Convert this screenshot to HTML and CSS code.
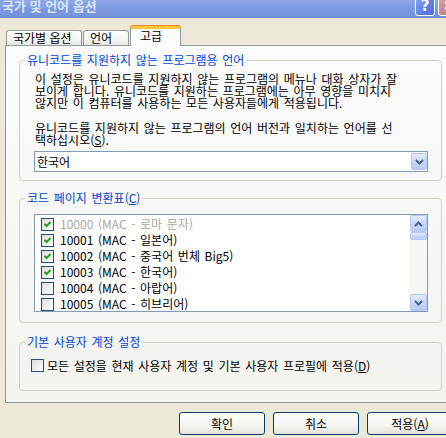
FILE: index.html
```html
<!DOCTYPE html>
<html lang="ko">
<head>
<meta charset="utf-8">
<title>국가 및 언어 옵션</title>
<link rel="stylesheet" href="styles.css">
</head>
<body>
<div class="titlebar">
  <span class="title">국가 및 언어 옵션</span>
  <div class="capbtns">
    <span class="capbtn help">?</span>
    <span class="capbtn close"><svg width="11" height="11" viewBox="0 0 11 11"><path d="M2 2 L9 9 M9 2 L2 9" stroke="#fff" stroke-width="2" fill="none"/></svg></span>
  </div>
</div>
<div class="tabs">
  <div class="tab t1">국가별 옵션</div>
  <div class="tab t2">언어</div>
  <div class="tab t3 active">고급</div>
</div>
<div class="panel">
  <fieldset class="group g1">
    <legend>유니코드를 지원하지 않는 프로그램용 언어</legend>
    <p class="desc">이 설정은 유니코드를 지원하지 않는 프로그램의 메뉴나 대화 상자가 잘<br>보이게 합니다. 유니코드를 지원하는 프로그램에는 아무 영향을 미치지<br>않지만 이 컴퓨터를 사용하는 모든 사용자들에게 적용됩니다.</p>
    <p class="desc second">유니코드를 지원하지 않는 프로그램의 언어 버전과 일치하는 언어를 선<br>택하십시오(<u>S</u>).</p>
    <div class="combo">
      <span class="combo-text">한국어</span>
      <span class="xpbtn dropbtn"><svg width="9" height="6" viewBox="0 0 9 6"><path d="M1 1 L4.5 4.5 L8 1" stroke="#4D6185" stroke-width="2" fill="none"/></svg></span>
    </div>
  </fieldset>
  <fieldset class="group g2">
    <legend>코드 페이지 변환표(<u>C</u>)</legend>
    <div class="listbox">
      <ul class="items">
        <li class="disabled"><span class="cb checked"><svg width="11" height="11" viewBox="0 0 11 11"><path d="M2.5 5 L4.5 7 L8.5 3" stroke="#21A121" stroke-width="2" fill="none"/></svg></span><span>10000 (MAC - 로마 문자)</span></li>
        <li><span class="cb checked"><svg width="11" height="11" viewBox="0 0 11 11"><path d="M2.5 5 L4.5 7 L8.5 3" stroke="#21A121" stroke-width="2" fill="none"/></svg></span><span>10001 (MAC - 일본어)</span></li>
        <li><span class="cb checked"><svg width="11" height="11" viewBox="0 0 11 11"><path d="M2.5 5 L4.5 7 L8.5 3" stroke="#21A121" stroke-width="2" fill="none"/></svg></span><span>10002 (MAC - 중국어 번체 Big5)</span></li>
        <li><span class="cb checked"><svg width="11" height="11" viewBox="0 0 11 11"><path d="M2.5 5 L4.5 7 L8.5 3" stroke="#21A121" stroke-width="2" fill="none"/></svg></span><span>10003 (MAC - 한국어)</span></li>
        <li><span class="cb"></span><span>10004 (MAC - 아랍어)</span></li>
        <li><span class="cb"></span><span>10005 (MAC - 히브리어)</span></li>
      </ul>
      <div class="scrollbar">
        <span class="xpbtn sbtn"><svg width="9" height="6" viewBox="0 0 9 6"><path d="M1 5 L4.5 1.5 L8 5" stroke="#4D6185" stroke-width="2" fill="none"/></svg></span>
        <span class="xpbtn thumb"></span>
        <span class="track"></span>
        <span class="xpbtn sbtn"><svg width="9" height="6" viewBox="0 0 9 6"><path d="M1 1 L4.5 4.5 L8 1" stroke="#4D6185" stroke-width="2" fill="none"/></svg></span>
      </div>
    </div>
  </fieldset>
  <fieldset class="group g3">
    <legend>기본 사용자 계정 설정</legend>
    <label class="check"><span class="cb"></span><span>모든 설정을 현재 사용자 계정 및 기본 사용자 프로필에 적용(<u>D</u>)</span></label>
  </fieldset>
</div>
<div class="buttons">
  <button class="btn">확인</button>
  <button class="btn">취소</button>
  <button class="btn">적용(<u>A</u>)</button>
</div>
</body>
</html>
```
FILE: styles.css
```css
* { box-sizing: border-box; }
html, body { margin: 0; padding: 0; }
body {
  width: 446px;
  height: 438px;
  overflow: hidden;
  background: #ECE9D8;
  font-family: "Noto Sans CJK KR", "Noto Sans", sans-serif;
  font-size: 12px;
  line-height: 12px;
  word-spacing: 1.3px;
  color: #000;
}
u { text-decoration: underline; text-underline-offset: 1px; }

/* title bar */
.titlebar {
  height: 18px;
  display: flex;
  align-items: flex-end;
  padding-left: 2px;
  background: linear-gradient(#8FA8E6, #7B98E0 55%, #7591DB);
  border-bottom: 1px solid #6A86D3;
}
.title {
  font-weight: bold;
  font-size: 13px;
  line-height: 13px;
  word-spacing: 0;
  color: #D8E4F8;
  margin-bottom: 5px;
  white-space: nowrap;
}
.capbtns {
  margin-left: auto;
  margin-right: -12px;
  display: flex;
  gap: 3px;
  margin-bottom: 1px;
}
.capbtn {
  width: 20px;
  height: 21px;
  border: 1px solid #fff;
  border-radius: 3px;
  display: flex;
  align-items: center;
  justify-content: center;
  color: #fff;
  font-weight: bold;
  font-size: 15px;
  font-family: "DejaVu Sans", sans-serif;
}
.help { background: linear-gradient(135deg, #8EAAF2, #5C7FE3 60%, #4E6FD8); }
.close { background: linear-gradient(135deg, #D8A9A9, #C48585 60%, #B87272); }

/* tabs */
.tabs {
  margin-top: 8px;
  height: 19px;
  display: flex;
  align-items: flex-end;
  padding-left: 6px;
  gap: 1px;
}
.tab {
  height: 15px;
  border: 1px solid #919B9C;
  border-bottom: none;
  border-radius: 3px 3px 0 0;
  background: linear-gradient(#FFFFFF, #F3F3EF 70%, #E6E5DE);
  padding-left: 6px;
  white-space: nowrap;
  line-height: 14px;
  word-spacing: 0;
}
.t1 { width: 76px; }
.t2 { width: 46px; }
.t3 { width: 51px; }
.tab.active {
  height: 20px;
  margin-bottom: -1px;
  position: relative;
  z-index: 1;
  background: #FCFCFE;
  border-top: 3px solid #FFC73C;
  box-shadow: 0 -1px 0 #E68B2C;
  padding-left: 9px;
  line-height: 14px;
}

/* panel */
.panel {
  margin-left: 5px;
  width: 460px;
  border: 1px solid #919B9C;
  background: linear-gradient(#FCFCFE, #F4F3EE);
  padding: 0 0 11px 13px;
  display: flex;
  flex-direction: column;
}
.group {
  width: 423px;
  margin: 0;
  min-width: 0;
  border: 1px solid #D0D0BF;
  border-radius: 4px;
  padding: 0 13px 0 15px;
}
.group legend {
  color: #0046D5;
  padding: 0 2px;
  margin-left: -10px;
  line-height: 12px;
  white-space: nowrap;
}
.g1 { margin-top: 8px; padding-top: 7px; padding-bottom: 8px; }
.g2 { margin-top: 11px; padding-top: 10px; padding-bottom: 10px; }
.g3 { margin-top: 13px; padding-top: 11px; padding-bottom: 18px; }

.desc { margin: 0; white-space: nowrap; }
.desc.second { margin-top: 13px; }

.combo {
  margin: 5px 0 0 -1px;
  width: 394px;
  height: 21px;
  border: 1px solid #7F9DB9;
  background: #fff;
  display: flex;
  align-items: center;
  padding: 0 0 0 2px;
}
.combo-text { flex: 1; }
.xpbtn {
  display: flex;
  align-items: center;
  justify-content: center;
  border: 1px solid #B5C8F3;
  border-radius: 2px;
  background: linear-gradient(#E2EBFE, #C9D9FC 50%, #B6CBF6);
}
.dropbtn { width: 16px; height: 17px; }

/* list */
.listbox {
  margin-left: -1px;
  width: 394px;
  height: 98px;
  border: 1px solid #7F9DB9;
  background: #fff;
  display: flex;
}
.items {
  flex: 1;
  list-style: none;
  margin: 0;
  padding: 1px 0 0 6px;
  overflow: hidden;
}
.items li {
  height: 16px;
  display: flex;
  align-items: center;
  gap: 6px;
  white-space: nowrap;
}
.items li.disabled { color: #ACA899; }
.cb {
  width: 13px;
  height: 13px;
  flex: none;
  border: 1px solid #1C5180;
  background: linear-gradient(135deg, #DCDCD7, #FFFFFF);
  display: flex;
  align-items: center;
  justify-content: center;
}
.scrollbar {
  width: 17px;
  display: flex;
  flex-direction: column;
  background: #F7F6F2;
}
.sbtn { height: 17px; }
.thumb { height: 8px; }
.track { flex: 1; }

.check {
  display: flex;
  align-items: center;
  gap: 3px;
  height: 13px;
  margin-left: -4px;
  white-space: nowrap;
}

/* buttons */
.buttons {
  margin-top: 9px;
  display: flex;
  gap: 8px;
  padding-left: 179px;
}
.btn {
  flex: none;
  width: 86px;
  height: 23px;
  border: 1px solid #003C74;
  border-radius: 3px;
  background: linear-gradient(#FFFFFF, #F5F4EF 60%, #E3E2DA);
  font: inherit;
  word-spacing: inherit;
  color: #000;
  padding: 0;
}
```
